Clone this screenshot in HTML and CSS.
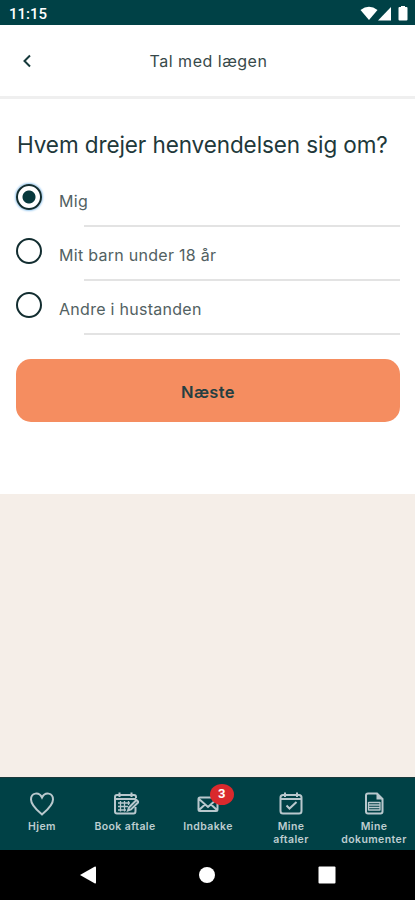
FILE: index.html
```html
<!DOCTYPE html>
<html lang="da">
<head>
<meta charset="utf-8">
<title>Tal med lægen</title>
<link rel="stylesheet" href="styles.css">
</head>
<body>
<div class="status">
  <span class="clock">11:15</span>
  <svg class="status-icons" width="50" height="18" viewBox="0 0 50 18" fill="#fff">
    <path d="M-1.500 5Q7-1.500 15.500 5L7 15Z"/>
    <path d="M29 2V15.500H16Z"/>
    <path d="M39 2V1h4v1h1.500q1 0 1 1v11.500q0 1-1 1h-7q-1 0-1-1V3q0-1 1-1Z"/>
  </svg>
</div>
<header class="header">
  <svg class="back" width="10" height="14" viewBox="0 0 10 14"><path d="M8 1.500 2.500 7 8 12.500"/></svg>
  <h1 class="title">Tal med lægen</h1>
</header>
<main class="form">
  <h2 class="question">Hvem drejer henvendelsen sig om?</h2>
  <div class="options">
    <label class="option"><span class="radio selected"></span><span class="label">Mig</span></label>
    <label class="option"><span class="radio"></span><span class="label">Mit barn under 18 år</span></label>
    <label class="option"><span class="radio"></span><span class="label">Andre i hustanden</span></label>
  </div>
  <button class="next">Næste</button>
</main>
<nav class="tabs">
  <a class="tab">
    <svg viewBox="0 0 28 26"><path d="M14 23.500C10 20 3 14.500 3 8.500 3 1.500 11 .5 14 6.500 17 .5 25 1.500 25 8.500 25 14.500 18 20 14 23.500Z"/></svg>
    <span>Hjem</span>
  </a>
  <a class="tab">
    <svg viewBox="0 0 28 26"><path d="M25 7V6Q25 4 23 4H6Q4 4 4 6V20.500Q4 22.500 6 22.500H22.500Q24.500 22.500 24.500 20V16M4 8H25M8.500 1.500V6M20.500 1.500V6"/><path class="thin" d="M7 12H19M7 15.500H17M7 19H15M9.500 10V20.500M13.500 10V20.500M17.500 10V14"/><path d="M18 16.500 25.500 9 27.500 11 20 18.500 17 19.500Z"/></svg>
    <span>Book aftale</span>
  </a>
  <a class="tab">
    <svg viewBox="0 0 28 26"><path d="M6 6.500H22Q23.500 6.500 23.500 8V18.500Q23.500 20 22 20H6Q4.500 20 4.500 18.500V8Q4.500 6.500 6 6.500ZM5 8 14 16 23 8M5 19 11 13.500M23 19 17 13.500"/></svg>
    <span>Indbakke</span>
    <b class="badge">3</b>
  </a>
  <a class="tab">
    <svg viewBox="0 0 28 26"><path d="M6 4H22Q24.500 4 24.500 6.500V20Q24.500 22.500 22 22.500H6Q3.500 22.500 3.500 20V6.500Q3.500 4 6 4ZM3.500 8H24.500M8 1.500V6M20 1.500V6M9.500 14.500 12.500 17.500 19.500 11"/></svg>
    <span>Mine</span><span>aftaler</span>
  </a>
  <a class="tab">
    <svg viewBox="0 0 28 26"><path d="M8 2.500H17L22.500 8V20.500Q22.500 22.500 20.500 22.500H8Q6 22.500 6 20.500V4.500Q6 2.500 8 2.500Z"/><path class="fold" d="M16.500 2V8.500H23Z"/><path class="thin" d="M8.500 11.500H20M8.500 14H20M8.500 16.500H20M8.500 19H20M8.500 11V19.500M20 11V19.500"/></svg>
    <span>Mine</span><span>dokumenter</span>
  </a>
</nav>
<div class="system">
  <svg width="16" height="18" viewBox="0 0 16 18"><path d="M0 9 14.500 .8Q16 0 16 1.500V16.500Q16 18 14.500 17.200Z"/></svg>
  <svg width="16" height="16" viewBox="0 0 16 16"><circle cx="8" cy="8" r="8"/></svg>
  <svg width="18" height="18" viewBox="0 0 18 18"><rect x=".5" y=".5" width="17" height="17" rx="1"/></svg>
</div>
</body>
</html>
```
FILE: styles.css
```css
* { box-sizing: border-box; }
body {
  margin: 0;
  height: 900px;
  display: flex;
  flex-direction: column;
  overflow: hidden;
  background: #f5eee8;
  color: #173f42;
  font-family: Inter, sans-serif;
}
.status {
  height: 25px;
  padding: 4px 3px 0 9px;
  display: flex;
  justify-content: space-between;
  background: #004146;
}
.clock { color: #fff; font: 500 15px/20px Roboto, sans-serif; letter-spacing: 0; }
.status-icons { margin-top: 1px; overflow: visible; }
.header {
  height: 74px;
  display: grid;
  grid-template-columns: 22px 1fr 20px;
  align-items: center;
  background: #fff;
  border-bottom: 3px solid #efefef;
}
.back { justify-self: end; fill: none; stroke: #16393b; stroke-width: 2; margin-right: -10px; }
.title { margin: 0; text-align: center; font-size: 16px; font-weight: 400; letter-spacing: .5px; color: #37494a; }
.form { height: 395px; background: #fff; padding: 30px 15px 0 17px; }
.question { margin: 0; font-size: 22.500px; line-height: 32px; font-weight: 400; letter-spacing: -.09px; white-space: nowrap; color: #21383a; }
.options { padding-top: 11px; margin-left: -1px; }
.option { height: 54px; display: flex; position: relative; }
.option::after { content: ""; position: absolute; left: 68px; right: 0; bottom: -1px; height: 2px; background: #e3e3e3; }
.radio { width: 26px; height: 26px; margin-top: 12px; border: 2px solid #122d30; border-radius: 50%; }
.radio.selected { background: radial-gradient(circle, #07383c 6px, #fff 7px); box-shadow: 0 0 2px 1px #9bcaf0; }
.label { margin: 18px 0 0 17px; font-size: 16px; line-height: 22px; letter-spacing: .28px; color: #526162; }
.next {
  display: block;
  width: 384px;
  height: 63px;
  margin: 25px 0 0 -1px;
  padding: 2px 0 0;
  border: 0;
  border-radius: 15px;
  background: #f58d60;
  color: #253f42;
  font: 600 16.500px Inter, sans-serif;
  letter-spacing: .4px;
}
.tabs {
  height: 73px;
  margin-top: auto;
  display: grid;
  grid-template-columns: repeat(5, 83px);
  background: #004146;
  border-top: 1px solid #19393c;
  color: #bdcdd0;
}
.tab {
  position: relative;
  padding: 13px 0 0 1px;
  display: flex;
  flex-direction: column;
  align-items: center;
  text-align: center;
  font-size: 10.500px;
  line-height: 12.500px;
  font-weight: 600;
  letter-spacing: .4px;
}
.tab svg { width: 28px; height: 26px; margin-bottom: 4px; fill: none; stroke: #b9c8cd; stroke-width: 2; }
.tab .thin { stroke-width: 1.300; }
.tab .fold { fill: #b9c8cd; stroke: none; }
.badge {
  position: absolute;
  left: 44px;
  top: 6px;
  width: 24px;
  height: 21px;
  border-radius: 50%;
  background: #da292d;
  color: #fff;
  font: 700 13px/20px Roboto, sans-serif;
}
.system {
  height: 50px;
  display: flex;
  justify-content: space-between;
  align-items: center;
  padding: 0 79px 0 80px;
  background: #000;
}
.system svg { fill: #fff; }
```
